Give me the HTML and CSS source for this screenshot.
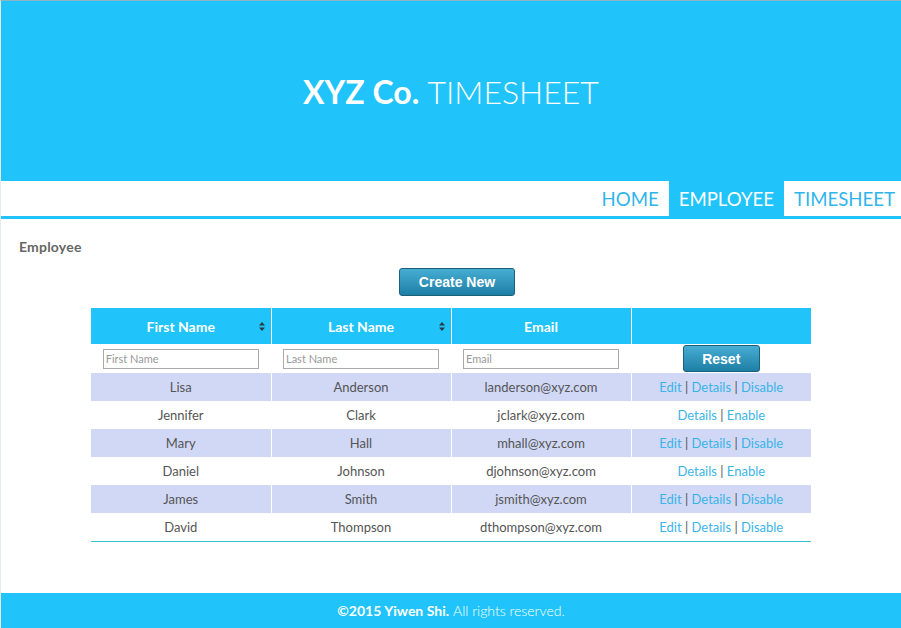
FILE: index.html
```html
<!DOCTYPE html>
<html>
<head>
<meta charset="utf-8">
<title>XYZ Co. Timesheet</title>
<link rel="stylesheet" href="styles.css">
</head>
<body>
<div class="page">
  <header class="banner">
    <h1 class="title"><span class="brand">XYZ Co.</span> <span class="light">TIMESHEET</span></h1>
  </header>
  <nav class="nav">
    <a class="nav-item" href="#">HOME</a>
    <a class="nav-item active" href="#">EMPLOYEE</a>
    <a class="nav-item" href="#">TIMESHEET</a>
  </nav>
  <main class="main">
    <h2 class="heading">Employee</h2>
    <div class="actions"><button class="btn btn-create">Create New</button></div>
    <table class="grid">
      <thead>
        <tr>
          <th><span>First Name</span><svg class="sort" width="6" height="9" viewBox="0 0 6 9"><path d="M3 0L6 3.5H0Z M3 9L6 5.5H0Z" fill="#2b3a44"/></svg></th>
          <th><span>Last Name</span><svg class="sort" width="6" height="9" viewBox="0 0 6 9"><path d="M3 0L6 3.5H0Z M3 9L6 5.5H0Z" fill="#2b3a44"/></svg></th>
          <th><span>Email</span></th>
          <th></th>
        </tr>
      </thead>
      <tbody>
        <tr class="filter">
          <td><input class="field" placeholder="First Name"></td>
          <td><input class="field" placeholder="Last Name"></td>
          <td><input class="field" placeholder="Email"></td>
          <td><button class="btn btn-reset">Reset</button></td>
        </tr>
        <tr class="odd"><td>Lisa</td><td>Anderson</td><td>landerson@xyz.com</td><td><a href="#">Edit</a> | <a href="#">Details</a> | <a href="#">Disable</a></td></tr>
        <tr><td>Jennifer</td><td>Clark</td><td>jclark@xyz.com</td><td><a href="#">Details</a> | <a href="#">Enable</a></td></tr>
        <tr class="odd"><td>Mary</td><td>Hall</td><td>mhall@xyz.com</td><td><a href="#">Edit</a> | <a href="#">Details</a> | <a href="#">Disable</a></td></tr>
        <tr><td>Daniel</td><td>Johnson</td><td>djohnson@xyz.com</td><td><a href="#">Details</a> | <a href="#">Enable</a></td></tr>
        <tr class="odd"><td>James</td><td>Smith</td><td>jsmith@xyz.com</td><td><a href="#">Edit</a> | <a href="#">Details</a> | <a href="#">Disable</a></td></tr>
        <tr class="last"><td>David</td><td>Thompson</td><td>dthompson@xyz.com</td><td><a href="#">Edit</a> | <a href="#">Details</a> | <a href="#">Disable</a></td></tr>
      </tbody>
    </table>
  </main>
  <footer class="footer"><b>©2015 Yiwen Shi.</b> <span class="light">All rights reserved.</span></footer>
</div>
</body>
</html>
```

FILE: styles.css
```css
html, body {
  margin: 0;
  padding: 0;
  background: #fff;
}
body {
  font-family: Lato, "Open Sans", "Liberation Sans", sans-serif;
  color: #555;
}
.page {
  border-top: 1px solid #8fb3c4;
  border-left: 1px solid #e4eef2;
  min-height: 627px;
  display: flex;
  flex-direction: column;
}
.banner {
  background: #20c4fb;
  height: 180px;
  display: flex;
  align-items: center;
  justify-content: center;
}
.title {
  margin: 0;
  font-size: 32px;
  font-weight: 400;
  color: #fff;
}
.brand { font-weight: 700; }
.light { font-weight: 300; }
.nav {
  display: flex;
  justify-content: flex-end;
  height: 35px;
  border-bottom: 3px solid #20c4fb;
}
.nav-item {
  display: flex;
  align-items: center;
  padding: 1px 10px 0 10px;
  font-size: 18.6px;
  color: #2fb5ea;
  text-decoration: none;
}
.nav-item:last-child { padding-right: 6px; }
.nav-item.active {
  background: #20c4fb;
  color: #fff;
}
.main {
  padding: 20px 0 0 0;
  flex: 1;
}
.heading {
  margin: 0 0 0 18px;
  font-size: 14px;
  font-weight: 700;
  line-height: 16px;
  color: #666;
  letter-spacing: 0.2px;
}
.actions {
  display: flex;
  justify-content: center;
  margin-top: 13px;
  padding-left: 12px;
}
.btn {
  font-family: "Liberation Sans", Arial, sans-serif;
  font-weight: 700;
  font-size: 14px;
  color: #fff;
  border: 1px solid #1c5f7b;
  border-radius: 3px;
  background: linear-gradient(#46add3, #1f7fa6);
  cursor: pointer;
}
.btn-create {
  width: 116px;
  height: 28px;
}
.btn-reset {
  width: 77px;
  height: 27px;
  vertical-align: middle;
}
.grid {
  margin: 12px 0 0 90px;
  width: 720px;
  border-collapse: collapse;
  table-layout: fixed;
  font-size: 13px;
}
.grid th {
  background: #20c4fb;
  color: #fff;
  font-weight: 700;
  font-size: 14px;
  height: 36px;
  padding: 0;
  border-left: 1px solid #fff;
  position: relative;
}
.grid th:first-child, .grid td:first-child { border-left: 0; }
.sort {
  position: absolute;
  right: 6px;
  top: 14px;
}
.grid td {
  text-align: center;
  height: 28px;
  padding: 0;
  border-left: 1px solid #fff;
  color: #555;
}
.grid tr.filter td { height: 29px; }
.grid tr.last td {
  border-bottom: 1px solid #38c2d2;
}
.field {
  width: 156px;
  height: 20px;
  box-sizing: border-box;
  border: 1px solid #aaa;
  font-family: Lato, sans-serif;
  font-size: 11px;
  padding: 0 2px;
  margin: 0;
  vertical-align: middle;
}
.field::placeholder { color: #999; }
.grid tr.odd td { background: #d0d8f5; }
.grid a {
  color: #3ab4e8;
  text-decoration: none;
}
.footer {
  margin-top: 51px;
  background: #20c4fb;
  height: 35px;
  display: flex;
  align-items: center;
  justify-content: center;
  color: #fff;
  font-size: 14px;
  gap: 4px;
}
.footer b { font-weight: 700; }
```
